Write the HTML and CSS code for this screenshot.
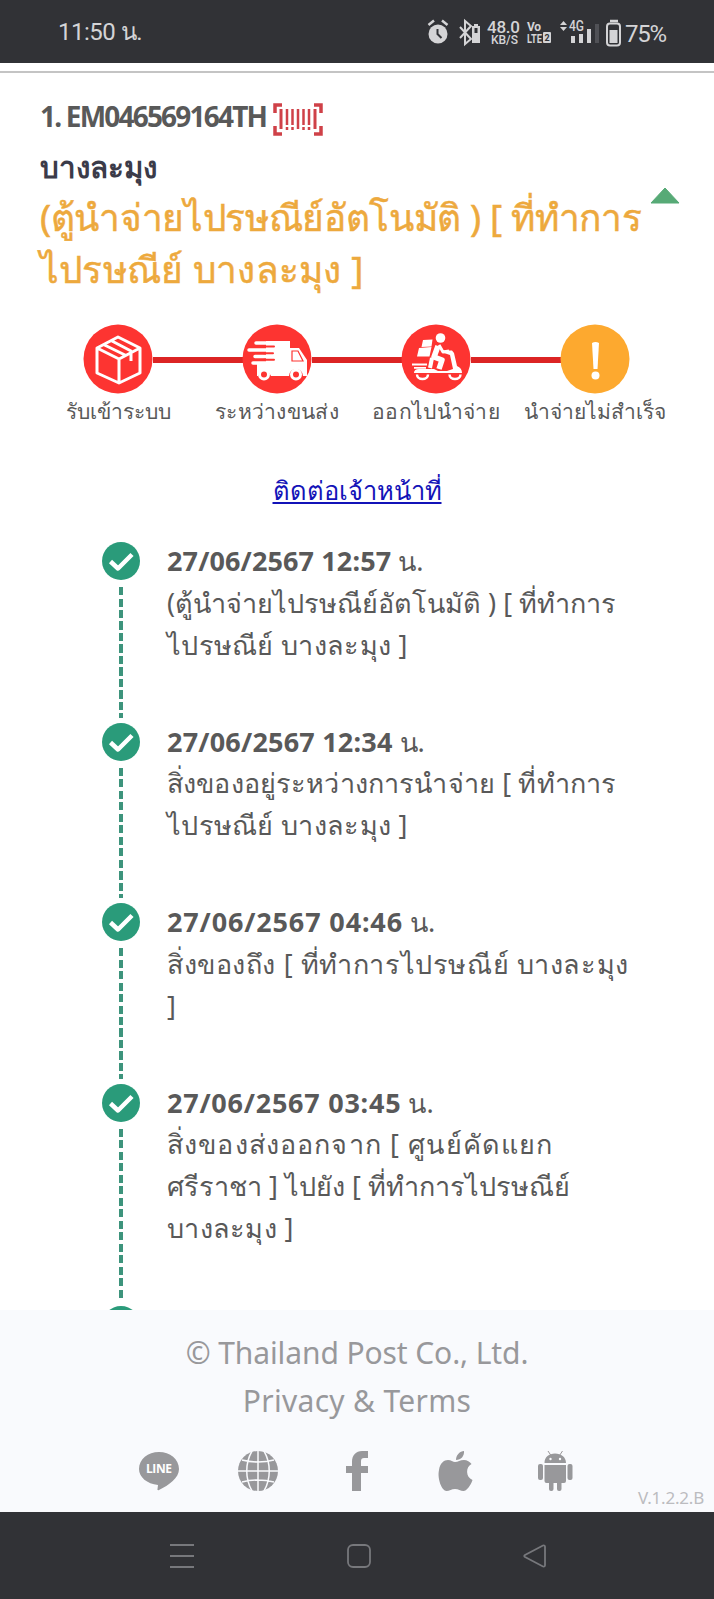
FILE: index.html
```
<!DOCTYPE html>
<html lang="th">
<head>
  <meta charset="UTF-8">
  <title>Track &amp; Trace</title>
  <link rel="stylesheet" href="styles.css">
</head>
<body>
  <header class="status-bar">
    <span class="clock">11:50 น.</span>
    <svg class="status-icons" width="246" height="32" viewBox="0 0 246 32" fill="#d4d4d6">
      <circle cx="12" cy="18" r="9.5"/>
      <path d="M2.5 9 8 4.5M21.500 9 16 4.500" stroke="#d4d4d6" stroke-width="2.500"/>
      <path d="M11.500 13v5l4 4" fill="none" stroke="#313236" stroke-width="2"/>
      <path d="m34 11 11 12-6 5V5l6 5-11 12" fill="none" stroke="#d4d4d6" stroke-width="2"/>
      <path d="M48 8h4v2h2v17h-8V10h2z"/>
      <path d="M48.500 12h3v5h-3z" fill="#313236"/>
      <text x="61" y="17" class="t-speed" textLength="33">48.0</text>
      <text x="65" y="28" class="t-unit" textLength="27">KB/S</text>
      <text x="101" y="15" class="t-volte" textLength="14">Vo</text>
      <text x="101" y="27" class="t-volte" textLength="15" lengthAdjust="spacingAndGlyphs">LTE</text>
      <rect x="117" y="16" width="8" height="11" rx="1"/>
      <text x="118.500" y="25" class="t-sim">2</text>
      <path d="m134 9 3.500-4 3.500 4zM134 11h7l-3.500 4z"/>
      <text x="143" y="15" class="t-4g" textLength="15" lengthAdjust="spacingAndGlyphs">4G</text>
      <path d="M145 20h4v7h-4zM153 18h4v9h-4zM161 13h4v14h-4z"/>
      <path d="M169 8h4v19h-4z" fill="#505156"/>
      <path d="M184 5h8" stroke="#d4d4d6" stroke-width="2.500"/>
      <rect x="181" y="7.500" width="13" height="22" rx="3" fill="none" stroke="#d4d4d6" stroke-width="2"/>
      <rect x="183.500" y="14" width="8" height="13"/>
      <text x="199" y="25.500" class="t-percent" textLength="42">75%</text>
    </svg>
  </header>

  <main class="tracking">
    <section class="summary">
      <div class="code-row">
        <h1 class="code">1. EM046569164TH</h1>
        <svg class="barcode" width="50" height="33" viewBox="0 0 50 33" fill="none" stroke="#cf4148">
          <path d="M9 2H2v8M41 2h7v8M9 31H2v-8M41 31h7v-8" stroke-width="3.500"/>
          <path d="M8 6v20M42 6v20" stroke-width="3"/>
          <path d="M14 6v16M19.500 6v16M25 6v20M30.500 6v16M36 6v16M14 24v3M19.500 24v3M30.500 24v3M36 24v3" stroke-width="2.500"/>
        </svg>
      </div>
      <h2 class="place">บางละมุง</h2>
      <p class="status"><span class="s1">(ตู้นำจ่ายไปรษณีย์อัตโนมัติ ) [ ที่ทำการ</span><br><span class="s2">ไปรษณีย์ บางละมุง ]</span></p>
      <svg class="caret" width="30" height="17" viewBox="0 0 30 17"><path d="M15 1 29 16H1z" fill="#57aa76" stroke="#57aa76" stroke-linejoin="round"/></svg>
    </section>

    <section class="steps">
      <div class="step">
        <svg class="step-icon" viewBox="0 0 70 70">
          <circle cx="35" cy="35" r="34.500" fill="#fd3431"/>
          <path d="M14 24v25l22 10 21-10V24L35 13zM14 24l22 11 21-11M36 35v24M20.500 20.500 43 31.500M28 16.500 48 27v10" fill="none" stroke="#fff" stroke-width="3" stroke-linejoin="round"/>
        </svg>
        <span class="step-label">รับเข้าระบบ</span>
      </div>
      <div class="step">
        <svg class="step-icon" viewBox="0 0 70 70">
          <circle cx="35" cy="35" r="34.500" fill="#fd3431"/>
          <path d="M24 17h24v7h9l8 12v16h-4a7 7 0 0 0-14 0H29a7 7 0 0 0-13 0h-1V40h9z" fill="#fff"/>
          <path d="M14 19h14M7 26h21M13 32.500h15M11 39h15" stroke="#fff" stroke-width="3.500" stroke-linecap="round"/>
          <path d="M22 22.500h10M22 29.300h9M22 35.800h10" stroke="#fd3431" stroke-width="2" stroke-linecap="round"/>
          <path d="M50 27h6l5 10H50z" fill="#fff" stroke="#fd3431" stroke-width="1.200"/>
          <g fill="#fd3431" stroke="#fff" stroke-width="3"><circle cx="22" cy="50.500" r="4.500"/><circle cx="54" cy="50.500" r="4.500"/></g>
        </svg>
        <span class="step-label wide">ระหว่างขนส่ง</span>
      </div>
      <div class="step">
        <svg class="step-icon" viewBox="0 0 70 70">
          <circle cx="35" cy="35" r="34.500" fill="#fd3431"/>
          <g fill="#fff">
            <circle cx="39.500" cy="14" r="4.800"/>
            <path d="m22 16 9.500-.500-1 7-10 .500zM18 24l12.500-1-2 9.500H16z"/>
            <path d="M13 49q0-4 5-4h15l4 2h9l6-2-3-14-6-2v-2.500h8l2 2.500 3 13q5 2 5 7z"/>
          </g>
          <path d="M37 22l-4 11 8 3-3 9" fill="none" stroke="#fff" stroke-width="5.500" stroke-linejoin="round"/>
          <path d="M38 21l4 7 6-1" fill="none" stroke="#fff" stroke-width="3" stroke-linejoin="round"/>
          <path d="M31 34l-2 10" stroke="#fff" stroke-width="4"/>
          <path d="M11 40.500h15M13 43.800h12" stroke="#fff" stroke-width="1.800"/>
          <path d="M16 50.500a5.500 4.500 0 0 0 11 0M48.500 50.500a5.500 4.500 0 0 0 11 0" fill="none" stroke="#fff" stroke-width="2.500"/>
        </svg>
        <span class="step-label wide">ออกไปนำจ่าย</span>
      </div>
      <div class="step">
        <svg class="step-icon" viewBox="0 0 70 70">
          <circle cx="35" cy="35" r="34.500" fill="#fda92f"/>
          <path d="M32 19q3.500-2 7 0l-1.500 26h-4z" fill="#fff"/>
          <circle cx="35.500" cy="51.500" r="4" fill="#fff"/>
        </svg>
        <span class="step-label">นำจ่ายไม่สำเร็จ</span>
      </div>
    </section>

    <a class="contact" href="#">ติดต่อเจ้าหน้าที่</a>

    <ol class="timeline">
      <li class="event">
        <svg class="check" viewBox="0 0 38 38"><circle cx="19" cy="19" r="19" fill="#2a9b7a"/><path d="m8.500 19.500 7.500 7 14-14" fill="none" stroke="#fff" stroke-width="4.500" stroke-linejoin="round"/></svg>
        <div class="detail">
          <p><b class="t1">27/06/2567 12:57</b> น.</p>
          <p>(ตู้นำจ่ายไปรษณีย์อัตโนมัติ ) [ ที่ทำการ</p>
          <p class="a2">ไปรษณีย์ บางละมุง ]</p>
        </div>
      </li>
      <li class="event">
        <svg class="check" viewBox="0 0 38 38"><circle cx="19" cy="19" r="19" fill="#2a9b7a"/><path d="m8.500 19.500 7.500 7 14-14" fill="none" stroke="#fff" stroke-width="4.500" stroke-linejoin="round"/></svg>
        <div class="detail">
          <p><b class="t2">27/06/2567 12:34</b> น.</p>
          <p class="b1">สิ่งของอยู่ระหว่างการนำจ่าย [ ที่ทำการ</p>
          <p class="a2">ไปรษณีย์ บางละมุง ]</p>
        </div>
      </li>
      <li class="event">
        <svg class="check" viewBox="0 0 38 38"><circle cx="19" cy="19" r="19" fill="#2a9b7a"/><path d="m8.500 19.500 7.500 7 14-14" fill="none" stroke="#fff" stroke-width="4.500" stroke-linejoin="round"/></svg>
        <div class="detail">
          <p><b class="t3">27/06/2567 04:46</b> น.</p>
          <p class="c1">สิ่งของถึง [ ที่ทำการไปรษณีย์ บางละมุง</p>
          <p>]</p>
        </div>
      </li>
      <li class="event last">
        <svg class="check" viewBox="0 0 38 38"><circle cx="19" cy="19" r="19" fill="#2a9b7a"/><path d="m8.500 19.500 7.500 7 14-14" fill="none" stroke="#fff" stroke-width="4.500" stroke-linejoin="round"/></svg>
        <div class="detail">
          <p><b class="t4">27/06/2567 03:45</b> น.</p>
          <p class="d1">สิ่งของส่งออกจาก [ ศูนย์คัดแยก</p>
          <p>ศรีราชา ] ไปยัง [ ที่ทำการไปรษณีย์</p>
          <p class="a2">บางละมุง ]</p>
        </div>
      </li>
      <li class="event">
        <svg class="check" viewBox="0 0 38 38"><circle cx="19" cy="19" r="19" fill="#2a9b7a"/></svg>
      </li>
    </ol>
  </main>

  <footer class="footer">
    <p class="copyright">© Thailand Post Co., Ltd.</p>
    <p class="terms">Privacy &amp; Terms</p>
    <div class="social">
      <svg viewBox="0 0 40 40"><path d="M20 1c11 0 20 7 20 17 0 9-10 16-20 21-1 .500-2 0-1.500-1l.500-4C8 33 0 26 0 18 0 8 9 1 20 1z"/><text x="7" y="22" class="t-line" textLength="26">LINE</text></svg>
      <svg viewBox="0 0 40 40"><circle cx="20" cy="20" r="20"/><path d="M20 0v40M0 20h40M4 9q16 4 32 0M4 31q16-4 32 0M14 0C7 12 7 28 14 40M26 0c7 12 7 28 0 40" fill="none" stroke="#f9fafd" stroke-width="1.500"/></svg>
      <svg viewBox="0 0 40 40"><path d="M15 40V22H9v-7h6v-4C15 4 19 0 25 0h6v7h-4c-2 0-3 1-3 3v5h7v7h-7v18z"/></svg>
      <svg viewBox="0 0 40 40"><path d="M28 0c.500 5-3 9-8 9 0-5 4-9 8-9zM19 11c3 0 5-2 9-2 3 0 6 2 7.500 4-6 3-6 13 1 16-2 6-6 11-9 11s-5-2-8.500-2-5.500 2-8.500 2C6 40 1 28 3 19 4 12 8 9 12 9c3 0 5 2 7 2z"/></svg>
      <svg viewBox="0 0 40 40"><path d="M9.500 12C9.500 6 14 2.500 20 2.500S31 6 31 12zM9.500 14H31v16a2 2 0 0 1-2 2H11.500a2 2 0 0 1-2-2z"/><rect x="3" y="13" width="5" height="16" rx="2"/><rect x="32.500" y="13" width="5" height="16" rx="2"/><rect x="14" y="30" width="4.500" height="10" rx="2"/><rect x="22" y="30" width="4.500" height="10" rx="2"/><path d="m13 0 3 4.500M27.500 0l-3 4.500" stroke="#9a9799"/><g fill="#f9fafd"><circle cx="15.500" cy="8" r="1.200"/><circle cx="25" cy="8" r="1.200"/></g></svg>
    </div>
    <span class="version">V.1.2.2.B</span>
  </footer>

  <nav class="nav-bar">
    <svg width="24" height="26" viewBox="0 0 24 26"><path d="M0 2h24M0 13h24M0 24h24"/></svg>
    <svg width="24" height="26" viewBox="0 0 24 26"><rect x="1" y="2" width="22" height="22" rx="5"/></svg>
    <svg width="24" height="26" viewBox="0 0 24 26"><path d="M20 2.500 2 12q-1.500 1 0 2l18 9.500q2 .500 2-1.500V4q0-2-2-1.500z"/></svg>
  </nav>
</body>
</html>
```
FILE: styles.css
```
* {
  box-sizing: border-box;
}

body {
  margin: 0;
  width: 714px;
  height: 1599px;
  display: flex;
  flex-direction: column;
  overflow: hidden;
  background: #fff;
  color: #595959;
  font-family: "Noto Sans", "Open Sans", sans-serif;
}

h1, h2, p, ol {
  margin: 0;
  padding: 0;
}

span, p, h1 {
  white-space: nowrap;
}

.status-bar {
  flex: none;
  height: 63px;
  display: flex;
  align-items: center;
  justify-content: space-between;
  padding: 0 42px 0 58px;
  background: #313236;
}

.clock {
  font: 24px/30px Roboto, sans-serif;
  letter-spacing: -.5px;
  color: #d4d4d6;
}

.status-icons {
  font-family: Roboto, sans-serif;
}

.t-speed { font-size: 17px; font-weight: 500; }
.t-unit { font-size: 12px; font-weight: 500; }
.t-volte { font-size: 12px; font-weight: 700; }
.t-sim { font-size: 9px; font-weight: 700; fill: #313236; }
.t-4g { font-size: 14px; font-weight: 500; }
.t-percent { font-size: 24px; }

.tracking {
  height: 1239px;
  flex: none;
  margin-top: 8px;
  border-top: 2px solid #c4c4c4;
  display: flex;
  flex-direction: column;
  overflow: hidden;
}

.tracking > * {
  flex: none;
}

.summary {
  position: relative;
  height: 250.500px;
  padding: 22px 40px 0;
}

.code-row {
  display: flex;
  align-items: center;
  gap: 6px;
  height: 42px;
}

.code {
  font-size: 28px;
  letter-spacing: -1.800px;
  width: 227px;
}

.barcode {
  margin-top: 7px;
}

.place {
  margin-top: 6px;
  font-size: 29.500px;
  line-height: 48px;
  color: #3b3b49;
}

.status {
  font-size: 37px;
  line-height: 52px;
  color: #eda93d;
  -webkit-text-stroke: .5px #eda93d;
}

.s1 { letter-spacing: -.350px; }
.s2 { letter-spacing: .200px; }

.caret {
  position: absolute;
  left: 650px;
  top: 114px;
}

.steps {
  display: flex;
  margin-left: 38.500px;
  height: 136px;
}

.step {
  width: 159px;
  display: flex;
  flex-direction: column;
  align-items: center;
}

/* connector drawn between two circles */
.step + .step::before {
  content: "";
  width: 90px;
  height: 6px;
  margin: 33px 0 -39px -158px;
  background: #dc2424;
}

.step-icon {
  width: 70px;
  height: 70px;
}

.step-label {
  font-size: 21px;
  line-height: 35px;
}

.step-label.wide {
  letter-spacing: .300px;
}

.contact {
  align-self: center;
  font-size: 25.500px;
  line-height: 60px;
  color: #1313b8;
}

.timeline {
  list-style: none;
  margin: 22.500px 0 0 102px;
}

.event {
  position: relative;
  display: flex;
  gap: 27px;
  height: 180.500px;
}

.event.last {
  height: 222px;
}

.event::before {
  content: "";
  position: absolute;
  left: 17px;
  top: 45px;
  bottom: 5px;
  width: 4px;
  background: repeating-linear-gradient(#3d947c 0 8px, transparent 8px 11.500px);
}

.check {
  width: 38px;
  height: 38px;
  flex: none;
}

.detail {
  font-size: 27px;
  line-height: 41.800px;
  margin-top: -2px;
}

.t1 { letter-spacing: .120px; }
.t2 { letter-spacing: .200px; }
.t3 { letter-spacing: .850px; }
.t4 { letter-spacing: .750px; }
.a2 { letter-spacing: .300px; }
.b1 { letter-spacing: .150px; }
.c1 { letter-spacing: .580px; }
.d1 { letter-spacing: 1.150px; }

.footer {
  position: relative;
  flex: none;
  height: 202px;
  padding-top: 19px;
  background: #f9fafd;
  color: #98989b;
  text-align: center;
  font-size: 30px;
  line-height: 48px;
}

.copyright { letter-spacing: -.100px; }
.terms { letter-spacing: .300px; }

.social {
  display: flex;
  justify-content: center;
  gap: 59px;
  margin-top: 26px;
}

.social svg {
  width: 40px;
  height: 40px;
  fill: #98989b;
}

.social .t-line {
  font: 700 12px "Open Sans", sans-serif;
  fill: #fff;
}

.version {
  position: absolute;
  right: 10px;
  bottom: 3px;
  font-size: 17px;
  line-height: 22px;
  letter-spacing: -.200px;
  color: #bcbcc0;
}

.nav-bar {
  flex: none;
  height: 87px;
  display: flex;
  align-items: center;
  gap: 152.500px;
  padding-left: 170px;
  background: #313236;
}

.nav-bar svg {
  fill: none;
  stroke: #77787c;
  stroke-width: 1.800;
}
```
